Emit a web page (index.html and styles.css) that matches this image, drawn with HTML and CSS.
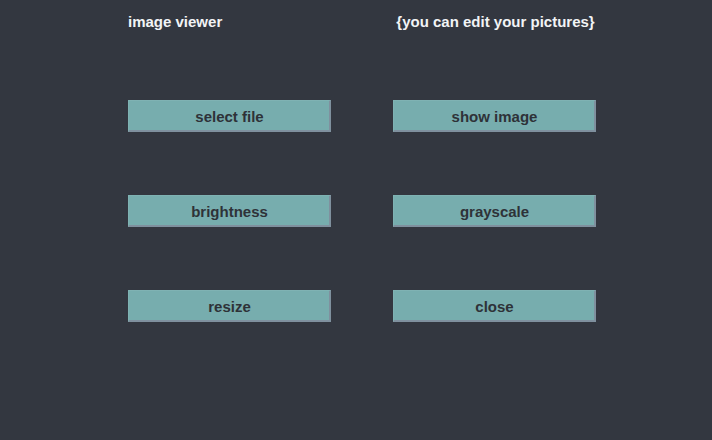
FILE: index.html
```html
<!DOCTYPE html>
<html>
<head>
<meta charset="utf-8">
<link rel="stylesheet" href="styles.css">
</head>
<body>
<div class="frame">
  <div class="grid">
    <div class="title">image viewer</div>
    <div class="title center">{you can edit your pictures}</div>
    <button class="btn">select file</button>
    <button class="btn">show image</button>
    <button class="btn">brightness</button>
    <button class="btn">grayscale</button>
    <button class="btn">resize</button>
    <button class="btn">close</button>
  </div>
</div>
</body>
</html>
```
FILE: styles.css
```css
html, body {
  margin: 0;
  padding: 0;
  background: #333740;
  width: 712px;
  height: 440px;
  overflow: hidden;
}
.frame {
  padding: 13px 0 0 128px;
  font-family: "Liberation Sans", Arial, sans-serif;
  font-weight: bold;
  font-size: 15px;
}
.grid {
  display: grid;
  grid-template-columns: 203px 203px;
  column-gap: 62px;
  row-gap: 63px;
}
.title {
  color: #f2f4f6;
  line-height: 17px;
  height: 17px;
  margin-bottom: 7px;
}
.title.center {
  text-align: center;
  padding-left: 2px;
}
.btn {
  height: 32px;
  margin: 0;
  padding: 2px 0 0 1px;
  background: #77adae;
  color: #2e3238;
  font: inherit;
  border: none;
  border-top: 1px solid #7fb2b3;
  border-left: 1px solid #7fb2b3;
  border-right: 2px solid #7f909e;
  border-bottom: 2px solid #7f909e;
  text-align: center;
}
```
